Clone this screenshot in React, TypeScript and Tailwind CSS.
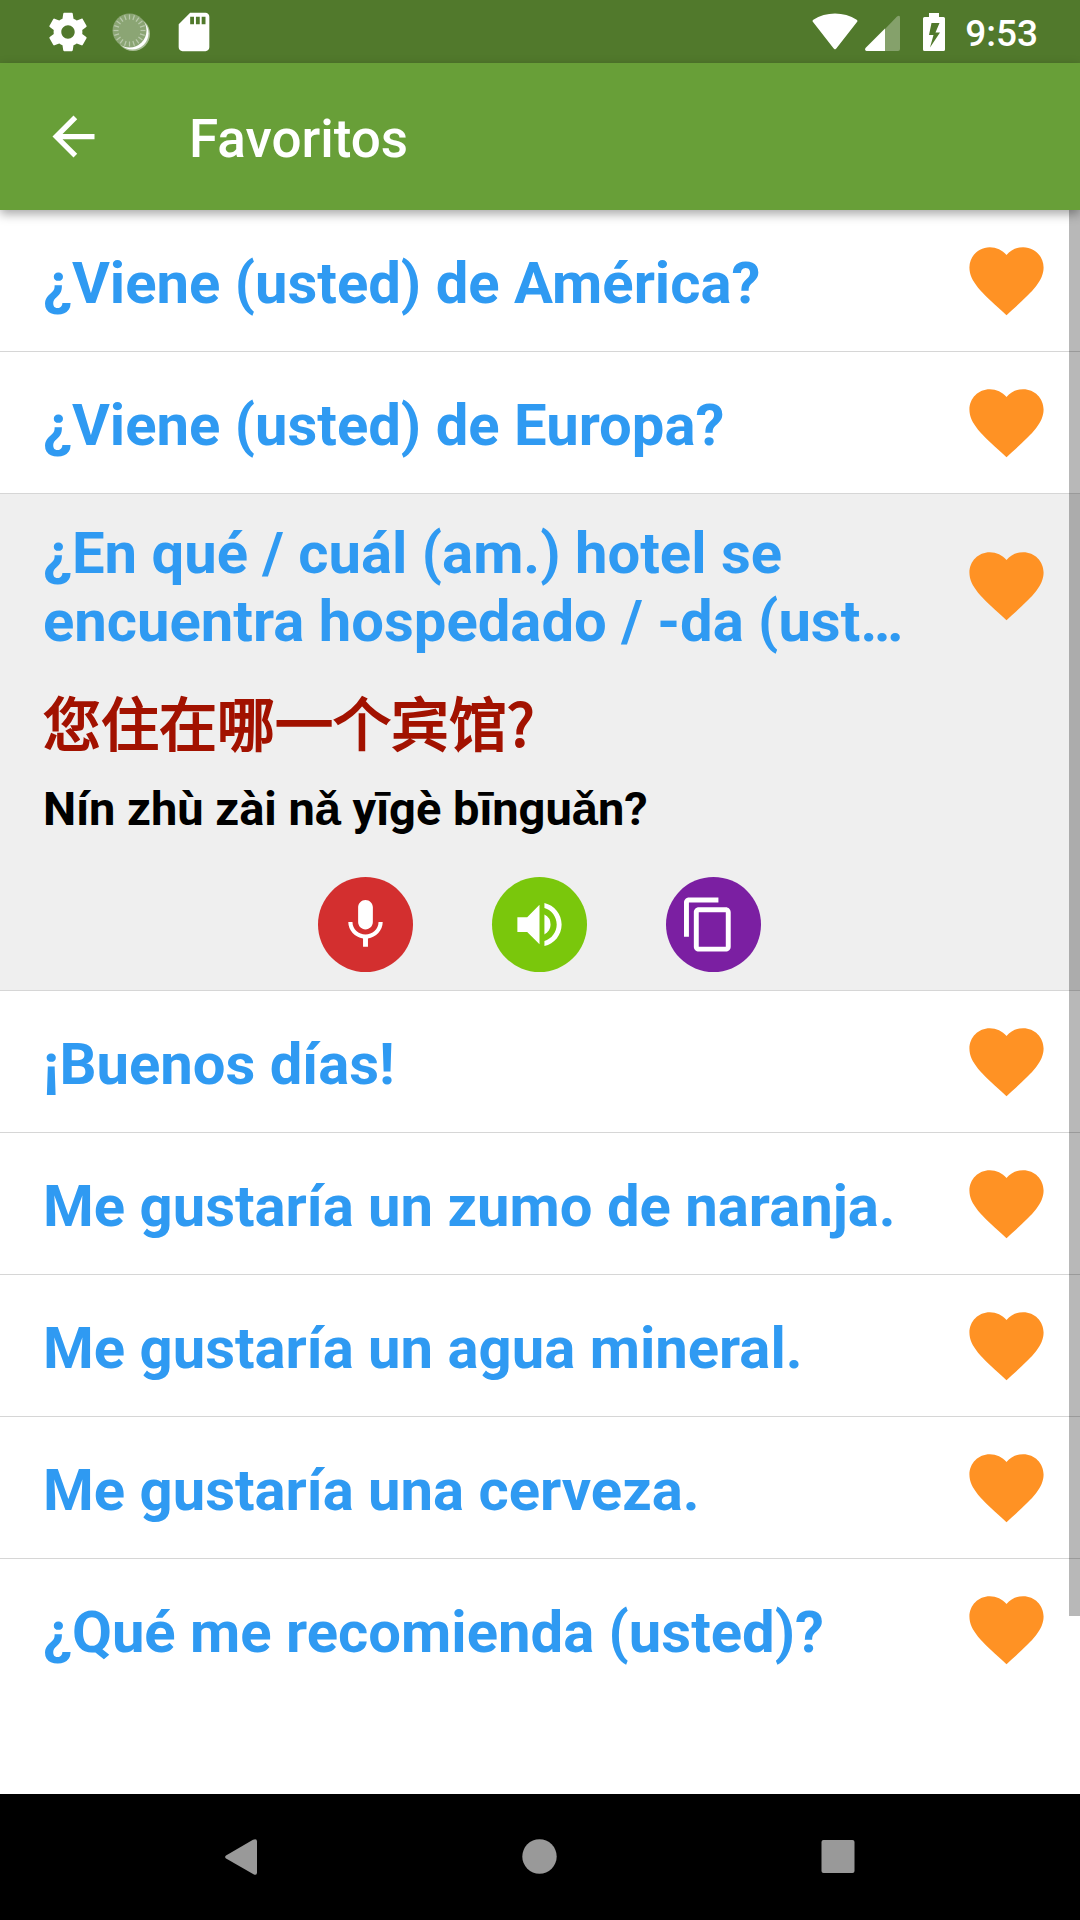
import React, { useState } from 'react';
import { MdArrowBack, MdMic, MdVolumeUp, MdSdCard, MdFavorite } from 'react-icons/md';

interface Phrase {
  id: number;
  text: string;
  translation: string;
  pinyin: string;
}

const PHRASES: Phrase[] = [
  { id: 1, text: '¿Viene (usted) de América?', translation: '您是从美国来的吗?', pinyin: 'Nín shì cóng Měiguó lái de ma?' },
  { id: 2, text: '¿Viene (usted) de Europa?', translation: '您是从欧洲来的吗?', pinyin: 'Nín shì cóng Ōuzhōu lái de ma?' },
  { id: 3, text: '¿En qué / cuál (am.) hotel se encuentra hospedado / -da (ust…', translation: '您住在哪一个宾馆?', pinyin: 'Nín zhù zài nǎ yīgè bīnguǎn?' },
  { id: 4, text: '¡Buenos días!', translation: '早上好!', pinyin: 'Zǎoshang hǎo!' },
  { id: 5, text: 'Me gustaría un zumo de naranja.', translation: '我要一杯橙汁。', pinyin: 'Wǒ yào yībēi chéngzhī.' },
  { id: 6, text: 'Me gustaría un agua mineral.', translation: '我要一杯矿泉水。', pinyin: 'Wǒ yào yībēi kuàngquánshuǐ.' },
  { id: 7, text: 'Me gustaría una cerveza.', translation: '我要一杯啤酒。', pinyin: 'Wǒ yào yībēi píjiǔ.' },
  { id: 8, text: '¿Qué me recomienda (usted)?', translation: '您推荐什么?', pinyin: 'Nín tuījiàn shénme?' },
];

const TICKS = Array.from({ length: 20 }, (_, i) => i * 18);

const GearIcon = () => (
  <svg width="46" height="46" viewBox="0 0 24 24" fill="currentColor" aria-hidden="true">
    <path d="M19.43 12.98c.04-.32.07-.64.07-.98s-.03-.66-.07-.98l2.11-1.65c.19-.15.24-.42.12-.64l-2-3.46c-.12-.22-.39-.3-.61-.22l-2.49 1c-.52-.4-1.08-.73-1.69-.98l-.38-2.65C14.46 2.18 14.25 2 14 2h-4c-.25 0-.46.18-.49.42l-.38 2.65c-.61.25-1.17.59-1.69.98l-2.49-1c-.23-.09-.49 0-.61.22l-2 3.46c-.13.22-.07.49.12.64l2.11 1.65c-.04.32-.07.65-.07.98s.03.66.07.98l-2.11 1.65c-.19.15-.24.42-.12.64l2 3.46c.12.22.39.3.61.22l2.49-1c.52.4 1.08.73 1.69.98l.38 2.65c.03.24.24.42.49.42h4c.25 0 .46-.18.49-.42l.38-2.65c.61-.25 1.17-.59 1.69-.98l2.49 1c.23.09.49 0 .61-.22l2-3.46c.12-.22.07-.49-.12-.64l-2.11-1.65zM12 15.5c-1.93 0-3.5-1.57-3.5-3.5s1.57-3.5 3.5-3.5 3.5 1.57 3.5 3.5-1.57 3.5-3.5 3.5z" />
  </svg>
);

const SyncIcon = () => (
  <svg width="46" height="46" viewBox="0 0 46 46" aria-hidden="true">
    <circle cx="25" cy="25" r="17" fill="#a8bd95" />
    <circle cx="24.3" cy="24.3" r="16.2" fill="#fff" />
    <circle cx="21.5" cy="21.5" r="17" fill="#8ba574" />
    {TICKS.map((deg) => (
      <path key={deg} d="M21.5 5.5v5" stroke="#b9c9ab" strokeWidth="1.2" transform={`rotate(${deg} 21.5 21.5)`} />
    ))}
  </svg>
);

const StatusBar = () => (
  <div className="flex h-[63px] shrink-0 items-center justify-between bg-[#51792c] pl-[45px] pr-[42px] text-white">
    <div className="flex items-center gap-[17px]">
      <GearIcon />
      <SyncIcon />
      <MdSdCard size={46} />
    </div>
    <div className="flex items-center">
      <svg width="46" height="38" viewBox="0 0 46 38" className="mr-[7px]" aria-hidden="true">
        <path d="M1.2 9.3Q-.3 8 1.3 6.8C14-1.6 32-1.6 44.7 6.8Q46.3 8 44.8 9.3L24.3 35.6Q23 37.2 21.7 35.6Z" fill="#fff" />
      </svg>
      <svg width="35" height="38" viewBox="0 0 35 38" className="mr-[23px]" aria-hidden="true">
        <path d="M20 16 32 3.5Q35 1.5 35 4.5V36Q35 38 33 38H20Z" fill="#fff" fillOpacity="0.3" />
        <path d="M20 15.5V38H1.5Q-.6 37.5.5 35Z" fill="#fff" />
      </svg>
      <svg width="22" height="38" viewBox="0 0 22 38" className="mr-[20px]" aria-hidden="true">
        <path d="M6 0h10v4h4.5Q22 4 22 5.5v31Q22 38 20.5 38h-19Q0 38 0 36.5v-31Q0 4 1.5 4H6ZM8.5 10 6 22h4.5L7 34.5 17 19.5h-4.5L16.5 10Z" fill="#fff" fillRule="evenodd" />
      </svg>
      <span className="pt-1 text-[37px] font-medium leading-[44px]">9:53</span>
    </div>
  </div>
);

const CopyIcon = () => (
  <svg width="59" height="59" viewBox="2 0 24 24" fill="currentColor" aria-hidden="true">
    <path d="M16 1H4c-1.1 0-2 .9-2 2v14h2V3h12V1zm3 4H8c-1.1 0-2 .9-2 2v14c0 1.1.9 2 2 2h11c1.1 0 2-.9 2-2V7c0-1.1-.9-2-2-2zm0 16H8V7h11v14z" />
  </svg>
);

interface PhraseRowProps {
  phrase: Phrase;
  isOpen: boolean;
  isFavorite: boolean;
  onToggle: () => void;
  onFavorite: () => void;
}

const PhraseRow: React.FC<PhraseRowProps> = ({ phrase, isOpen, isFavorite, onToggle, onFavorite }) => (
  <li className={isOpen ? 'border-b border-[#d6d6d6] bg-[#efefef]' : 'border-b border-[#d6d6d6] last:border-b-0'}>
    <div className={isOpen ? 'flex items-center gap-10 pl-[43px] pr-[29px] pt-[21px]' : 'flex h-[141px] items-center gap-10 pl-[43px] pr-[29px]'}>
      <button onClick={onToggle} aria-expanded={isOpen} className="min-w-0 flex-1 pt-1 text-left">
        <span className="line-clamp-2 text-[58px] font-bold leading-[68px] text-[#2f9af2]">{phrase.text}</span>
      </button>
      <button onClick={onFavorite} aria-pressed={isFavorite} aria-label="Favorito" className="shrink-0">
        <MdFavorite size={89} className={isFavorite ? 'text-[#ff9224]' : 'text-gray-300'} />
      </button>
    </div>

    {isOpen && (
      <>
        <div className="px-[43px] pt-8">
          <p lang="zh-CN" className="font-['Noto_Sans_CJK_SC',sans-serif] text-[58px] font-normal leading-[68px] text-[#a21200] [-webkit-text-stroke:2px_#a21200]">{phrase.translation}</p>
          <p className="mt-[26px] text-[47px] font-bold leading-[56px] text-black">{phrase.pinyin}</p>
        </div>
        <div className="flex justify-center gap-[79px] pb-[18px] pr-0.5 pt-10 text-white">
          <button aria-label="Grabar" className="flex size-[95px] items-center justify-center rounded-full bg-[#d32f2f]">
            <MdMic size={59} />
          </button>
          <button aria-label="Escuchar" className="flex size-[95px] items-center justify-center rounded-full bg-[#7ac70c]">
            <MdVolumeUp size={59} />
          </button>
          <button aria-label="Copiar" className="flex size-[95px] items-center justify-center rounded-full bg-[#7b1fa2]">
            <CopyIcon />
          </button>
        </div>
      </>
    )}
  </li>
);

const NavigationBar = () => (
  <nav className="flex h-[126px] shrink-0 items-center bg-black px-[93px]">
    <button aria-label="Atrás" className="flex flex-1 justify-center">
      <svg width="36" height="36" viewBox="0 0 36 36" fill="#999" aria-hidden="true">
        <path d="M2 16.5 29 .8Q33 -.8 33 2.5V33.5Q33 36.8 29.5 35.2L2.5 19.8Q0 18 2 16.5Z" />
      </svg>
    </button>
    <button aria-label="Inicio" className="flex flex-1 justify-center">
      <svg width="36" height="36" viewBox="0 0 36 36" fill="#999" aria-hidden="true">
        <circle cx="17.5" cy="17.5" r="17.2" />
      </svg>
    </button>
    <button aria-label="Recientes" className="flex flex-1 justify-center">
      <svg width="36" height="36" viewBox="0 0 36 36" fill="#999" aria-hidden="true">
        <rect x="1.5" y="1" width="33" height="33" rx="2" />
      </svg>
    </button>
  </nav>
);

export default function App() {
  const [openId, setOpenId] = useState<number | null>(3);
  const [favorites, setFavorites] = useState<number[]>(PHRASES.map(p => p.id));

  const toggleFavorite = (id: number) => {
    setFavorites(prev => prev.includes(id) ? prev.filter(f => f !== id) : [...prev, id]);
  };

  return (
    <div className="flex h-screen flex-col bg-white font-[Roboto,'Liberation_Sans','Noto_Sans_CJK_SC',sans-serif]">
      <StatusBar />

      <header className="relative z-10 flex h-[147px] shrink-0 items-center gap-[84px] bg-[#689f38] px-[42px] text-white shadow-[0_4px_10px_rgba(0,0,0,0.35)]">
        <button aria-label="Volver">
          <MdArrowBack size={63} />
        </button>
        <h1 className="pt-1 text-[53px] font-medium leading-[62px]">Favoritos</h1>
      </header>

      <main className="relative min-h-0 flex-1 overflow-hidden">
        <ul>
          {PHRASES.map(phrase => (
            <PhraseRow
              key={phrase.id}
              phrase={phrase}
              isOpen={openId === phrase.id}
              isFavorite={favorites.includes(phrase.id)}
              onToggle={() => setOpenId(openId === phrase.id ? null : phrase.id)}
              onFavorite={() => toggleFavorite(phrase.id)}
            />
          ))}
        </ul>
        {/* scroll thumb */}
        <div className="absolute bottom-[50px] right-0 top-0 w-[11px] bg-black/28"></div>
      </main>

      {/* banner slot */}
      <div className="h-32 shrink-0"></div>

      <NavigationBar />
    </div>
  );
}
